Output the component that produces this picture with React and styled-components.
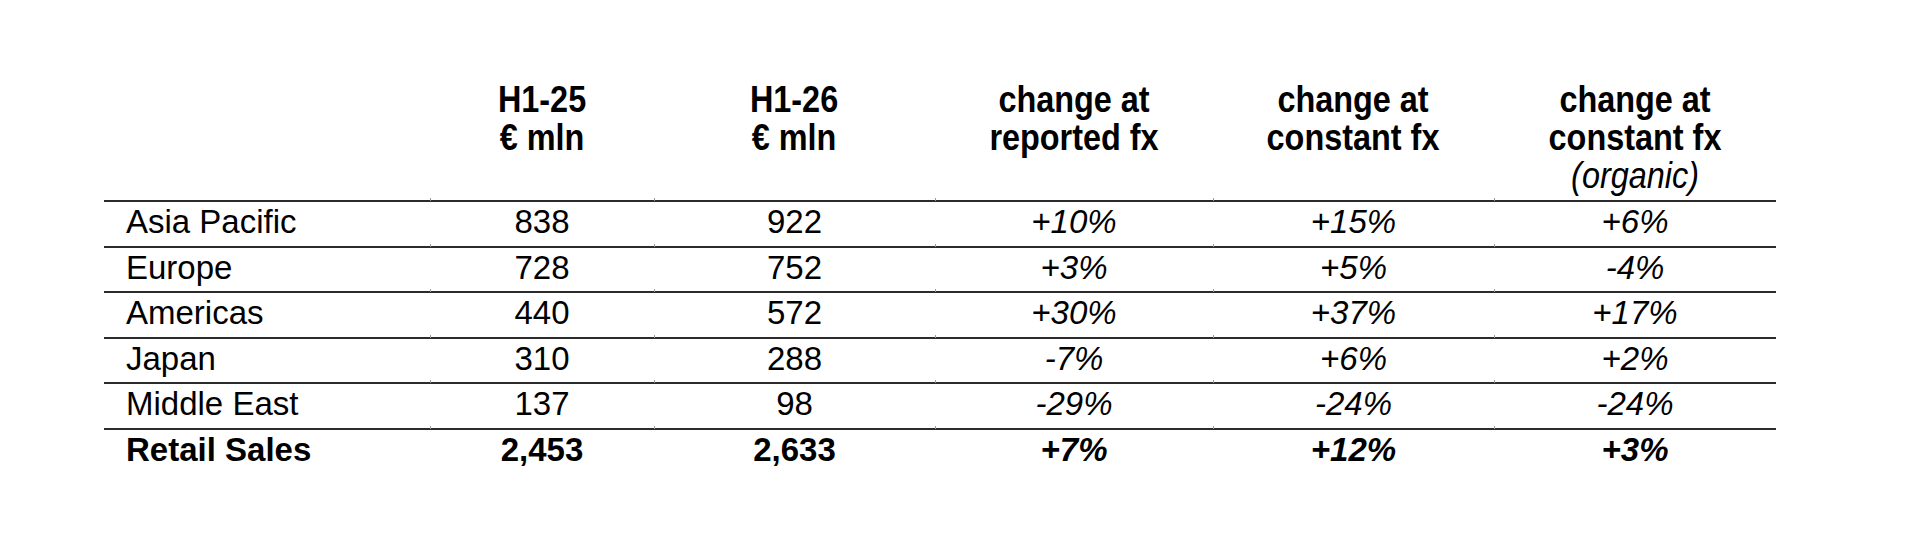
import React from 'react';
import styled, { createGlobalStyle } from 'styled-components';

const regions = [
	{ name: 'Asia Pacific', h125: '838', h126: '922', reported: '+10%', constant: '+15%', organic: '+6%' },
	{ name: 'Europe', h125: '728', h126: '752', reported: '+3%', constant: '+5%', organic: '-4%' },
	{ name: 'Americas', h125: '440', h126: '572', reported: '+30%', constant: '+37%', organic: '+17%' },
	{ name: 'Japan', h125: '310', h126: '288', reported: '-7%', constant: '+6%', organic: '+2%' },
	{ name: 'Middle East', h125: '137', h126: '98', reported: '-29%', constant: '-24%', organic: '-24%' },
];

const total = { name: 'Retail Sales', h125: '2,453', h126: '2,633', reported: '+7%', constant: '+12%', organic: '+3%' };

const App = () => {
	const renderRow = (row, bold) => (
		<Row key={row.name}>
			<Label bold={bold}>{row.name}</Label>
			<Cell bold={bold}>{row.h125}</Cell>
			<Cell bold={bold}>{row.h126}</Cell>
			<Cell bold={bold} italic>{row.reported}</Cell>
			<Cell bold={bold} italic>{row.constant}</Cell>
			<Cell bold={bold} italic>{row.organic}</Cell>
		</Row>
	);

	return (
		<>
			<GlobalStyle />
			<Page>
				<Table>
					<HeadRow>
						<HeadCell />
						<HeadCell>
							<Squeeze>
								H1-25
								<br />€ mln
							</Squeeze>
						</HeadCell>
						<HeadCell>
							<Squeeze>
								H1-26
								<br />€ mln
							</Squeeze>
						</HeadCell>
						<HeadCell>
							<Squeeze>
								change at
								<br />
								reported fx
							</Squeeze>
						</HeadCell>
						<HeadCell>
							<Squeeze>
								change at
								<br />
								constant fx
							</Squeeze>
						</HeadCell>
						<HeadCell>
							<Squeeze>
								change at
								<br />
								constant fx
								<br />
								<Note>(organic)</Note>
							</Squeeze>
						</HeadCell>
					</HeadRow>
					{regions.map((r) => renderRow(r, false))}
					{renderRow(total, true)}
				</Table>
			</Page>
		</>
	);
};

const GlobalStyle = createGlobalStyle`
	html, body {
		margin: 0;
		padding: 0;
		background: #fff;
	}
	body {
		font-family: 'Liberation Sans', Arial, sans-serif;
		color: #000;
	}
`;

const Page = styled.div`
	width: 1920px;
	height: 540px;
	box-sizing: border-box;
	padding: 81px 144px 0 104px;
`;

const Table = styled.div`
	width: 1672px;
`;

const columns = '326px 224px 281px 278px 281px 282px';

const HeadRow = styled.div`
	display: grid;
	grid-template-columns: ${columns};
	height: 119px;
`;

const HeadCell = styled.div`
	font-size: 36px;
	line-height: 38px;
	font-weight: 700;
	text-align: center;
`;

// the header type in the slide is set a little narrow
const Squeeze = styled.span`
	display: inline-block;
	transform: scaleX(0.9);
	transform-origin: center top;
`;

const Note = styled.span`
	font-weight: 400;
	font-style: italic;
`;

const Row = styled.div`
	display: grid;
	grid-template-columns: ${columns};
	border-top: 2px solid #2b2b2b;
	height: 45.6px;
	box-sizing: border-box;
`;

const Cell = styled.div`
	position: relative;
	font-size: 33px;
	line-height: 40px;
	text-align: center;
	font-weight: ${(p) => (p.bold ? 700 : 400)};
	font-style: ${(p) => (p.italic ? 'italic' : 'normal')};

	&::before {
		content: '';
		position: absolute;
		left: 0;
		top: -4px;
		width: 1px;
		height: 3px;
		background: #9a9a9a;
	}
`;

const Label = styled.div`
	font-size: 33px;
	line-height: 40px;
	padding-left: 22px;
	font-weight: ${(p) => (p.bold ? 700 : 400)};
`;

export default App;
